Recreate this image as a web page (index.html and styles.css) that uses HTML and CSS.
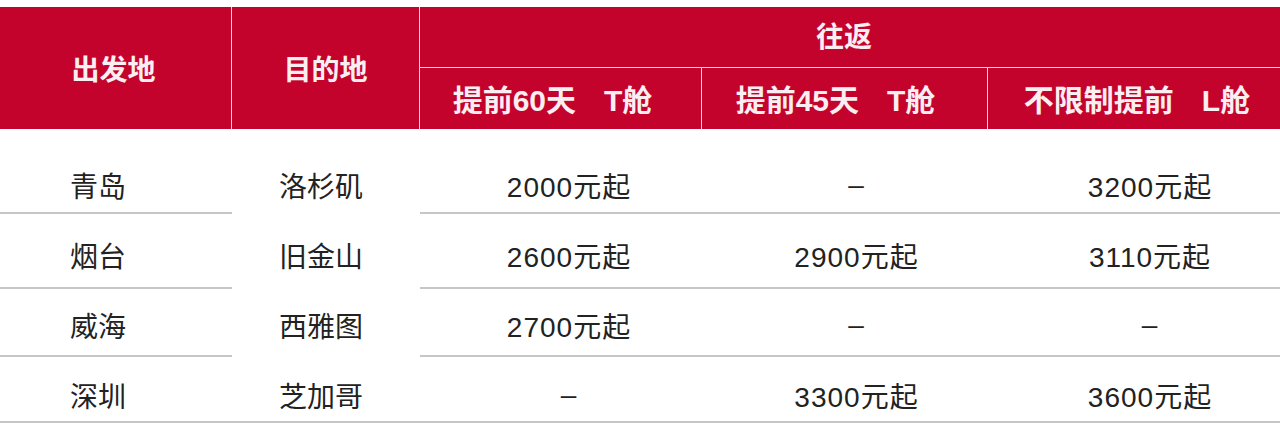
FILE: index.html
```html
<!DOCTYPE html>
<html lang="zh">
<head>
<meta charset="utf-8">
<link rel="stylesheet" href="styles.css">
</head>
<body>
<div class="page">
  <div class="head">
    <div class="h h-from">出发地</div>
    <div class="h h-to">目的地</div>
    <div class="h h-rt">往返</div>
    <div class="h h-sub">提前60天<span class="cls">T舱</span></div>
    <div class="h h-sub">提前45天<span class="cls">T舱</span></div>
    <div class="h h-sub">不限制提前<span class="cls">L舱</span></div>
  </div>
  <div class="body">
    <div class="row r1">
      <div class="c c1">青岛</div>
      <div class="c c2 noline">洛杉矶</div>
      <div class="c c3">2000元起</div>
      <div class="c c4">–</div>
      <div class="c c5">3200元起</div>
    </div>
    <div class="row r2">
      <div class="c c1">烟台</div>
      <div class="c c2 noline">旧金山</div>
      <div class="c c3">2600元起</div>
      <div class="c c4">2900元起</div>
      <div class="c c5">3110元起</div>
    </div>
    <div class="row r3">
      <div class="c c1">威海</div>
      <div class="c c2 noline">西雅图</div>
      <div class="c c3">2700元起</div>
      <div class="c c4">–</div>
      <div class="c c5">–</div>
    </div>
    <div class="row r4">
      <div class="c c1">深圳</div>
      <div class="c c2">芝加哥</div>
      <div class="c c3">–</div>
      <div class="c c4">3300元起</div>
      <div class="c c5">3600元起</div>
    </div>
  </div>
</div>
</body>
</html>
```

FILE: styles.css
```css
html, body {
  margin: 0;
  padding: 0;
  background: #ffffff;
}
body {
  font-family: "Liberation Sans", "Noto Sans CJK SC", sans-serif;
  width: 1280px;
  height: 431px;
  overflow: hidden;
}
.page {
  padding-top: 7px;
}
.head {
  display: grid;
  grid-template-columns: 231px 187px 281px 285px 292px;
  grid-template-rows: 60px 61px;
  gap: 1px;
  background: #f4d6dc;
}
.h {
  background: #c4032c;
  color: #fbeef2;
  font-size: 28px;
  font-weight: 700;
  display: flex;
  align-items: center;
  justify-content: center;
}
.h-from { grid-column: 1; grid-row: 1 / span 2; padding-right: 4px; }
.h-to { grid-column: 2; grid-row: 1 / span 2; }
.h-rt { grid-column: 3 / span 3; grid-row: 1; padding-bottom: 4px; padding-right: 12px; }
.h-sub { font-size: 30px; padding-bottom: 2px; }
.h-sub:nth-of-type(4) { padding-right: 16px; }
.h-sub:nth-of-type(5) { padding-right: 18px; }
.h-sub:nth-of-type(6) { padding-left: 6px; }
.cls { margin-left: 28px; }
.body {
  display: flex;
  flex-direction: column;
}
.row {
  display: grid;
  grid-template-columns: 232px 188px 282px 286px 292px;
}
.c {
  font-size: 28px;
  color: #222222;
  border-bottom: 2px solid #c6c6c6;
  display: flex;
  align-items: center;
  justify-content: center;
  box-sizing: border-box;
}
.c.noline { border-bottom-color: transparent; }
.c1 { justify-content: flex-start; padding-left: 70px; }
.c2 { justify-content: flex-start; padding-left: 47px; }
.c3, .c4, .c5 { letter-spacing: 1px; }
.c3 { padding-left: 16px; }
.c4 { padding-left: 23px; }
.c5 { padding-left: 32px; }
.r1 .c { height: 85px; padding-top: 29px; }
.r2 .c { height: 75px; padding-top: 9px; }
.r3 .c { height: 68px; padding-top: 6px; }
.r4 .c { height: 66px; padding-top: 12px; }
```
